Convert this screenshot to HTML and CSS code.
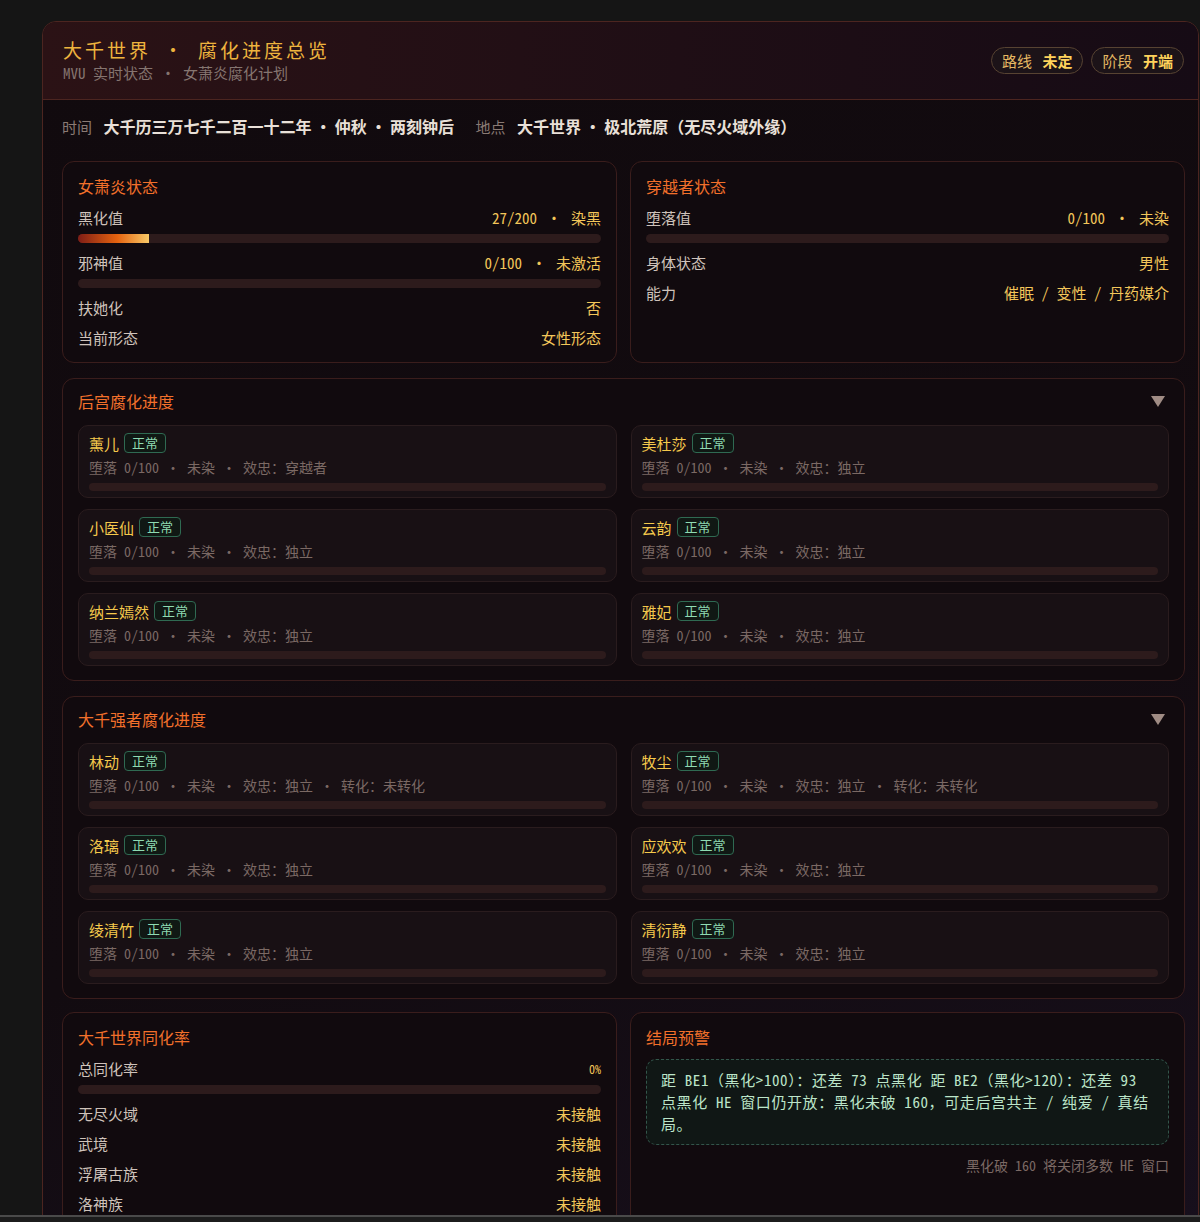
FILE: index.html
```html
<!DOCTYPE html>
<html lang="zh-CN">
<head>
    <meta charset="UTF-8">
    <meta name="viewport" content="width=device-width, initial-scale=1.0">
    <title>大千世界 · 腐化进度总览</title>
    <link rel="stylesheet" href="styles.css">
</head>
<body>
    <div class="panel">
        <header class="panel-head">
            <div>
                <h1 class="title">大千世界 · 腐化进度总览</h1>
                <div class="subtitle">MVU 实时状态 · 女萧炎腐化计划</div>
            </div>
            <div class="pills">
                <span class="pill">路线 <b>未定</b></span>
                <span class="pill">阶段 <b>开端</b></span>
            </div>
        </header>

        <div class="panel-body">
            <div class="where">
                <span class="where-label">时间</span>
                <span class="where-value">大千历三万七千二百一十二年 · 仲秋 · 两刻钟后</span>
                <span class="where-label gap">地点</span>
                <span class="where-value">大千世界 · 极北荒原（无尽火域外缘）</span>
            </div>

            <div class="two-col">
                <section class="card">
                    <h2 class="card-title">女萧炎状态</h2>
                    <div class="rows">
                        <div class="metric">
                            <div class="kv"><span>黑化值</span><span class="val">27/200 <span class="dot">·</span> 染黑</span></div>
                            <div class="bar"><div class="fill" style="width: 13.5%"></div></div>
                        </div>
                        <div class="metric">
                            <div class="kv"><span>邪神值</span><span class="val">0/100 <span class="dot">·</span> 未激活</span></div>
                            <div class="bar"></div>
                        </div>
                        <div class="kv"><span>扶她化</span><span class="val">否</span></div>
                        <div class="kv"><span>当前形态</span><span class="val">女性形态</span></div>
                    </div>
                </section>
                <section class="card">
                    <h2 class="card-title">穿越者状态</h2>
                    <div class="rows">
                        <div class="metric">
                            <div class="kv"><span>堕落值</span><span class="val">0/100 <span class="dot">·</span> 未染</span></div>
                            <div class="bar"></div>
                        </div>
                        <div class="kv"><span>身体状态</span><span class="val">男性</span></div>
                        <div class="kv"><span>能力</span><span class="val">催眠 / 变性 / 丹药媒介</span></div>
                    </div>
                </section>
            </div>

            <section class="card group">
                <div class="group-head">
                    <h2 class="card-title">后宫腐化进度</h2>
                    <span class="caret"></span>
                </div>
                <div class="people">
                    <div class="person">
                        <div class="person-name">薰儿 <span class="badge">正常</span></div>
                        <div class="person-meta">堕落 0/100 · 未染 · 效忠：穿越者</div>
                        <div class="bar thin"></div>
                    </div>
                    <div class="person">
                        <div class="person-name">美杜莎 <span class="badge">正常</span></div>
                        <div class="person-meta">堕落 0/100 · 未染 · 效忠：独立</div>
                        <div class="bar thin"></div>
                    </div>
                    <div class="person">
                        <div class="person-name">小医仙 <span class="badge">正常</span></div>
                        <div class="person-meta">堕落 0/100 · 未染 · 效忠：独立</div>
                        <div class="bar thin"></div>
                    </div>
                    <div class="person">
                        <div class="person-name">云韵 <span class="badge">正常</span></div>
                        <div class="person-meta">堕落 0/100 · 未染 · 效忠：独立</div>
                        <div class="bar thin"></div>
                    </div>
                    <div class="person">
                        <div class="person-name">纳兰嫣然 <span class="badge">正常</span></div>
                        <div class="person-meta">堕落 0/100 · 未染 · 效忠：独立</div>
                        <div class="bar thin"></div>
                    </div>
                    <div class="person">
                        <div class="person-name">雅妃 <span class="badge">正常</span></div>
                        <div class="person-meta">堕落 0/100 · 未染 · 效忠：独立</div>
                        <div class="bar thin"></div>
                    </div>
                </div>
            </section>

            <section class="card group">
                <div class="group-head">
                    <h2 class="card-title">大千强者腐化进度</h2>
                    <span class="caret"></span>
                </div>
                <div class="people">
                    <div class="person">
                        <div class="person-name">林动 <span class="badge">正常</span></div>
                        <div class="person-meta">堕落 0/100 · 未染 · 效忠：独立 · 转化：未转化</div>
                        <div class="bar thin"></div>
                    </div>
                    <div class="person">
                        <div class="person-name">牧尘 <span class="badge">正常</span></div>
                        <div class="person-meta">堕落 0/100 · 未染 · 效忠：独立 · 转化：未转化</div>
                        <div class="bar thin"></div>
                    </div>
                    <div class="person">
                        <div class="person-name">洛璃 <span class="badge">正常</span></div>
                        <div class="person-meta">堕落 0/100 · 未染 · 效忠：独立</div>
                        <div class="bar thin"></div>
                    </div>
                    <div class="person">
                        <div class="person-name">应欢欢 <span class="badge">正常</span></div>
                        <div class="person-meta">堕落 0/100 · 未染 · 效忠：独立</div>
                        <div class="bar thin"></div>
                    </div>
                    <div class="person">
                        <div class="person-name">绫清竹 <span class="badge">正常</span></div>
                        <div class="person-meta">堕落 0/100 · 未染 · 效忠：独立</div>
                        <div class="bar thin"></div>
                    </div>
                    <div class="person">
                        <div class="person-name">清衍静 <span class="badge">正常</span></div>
                        <div class="person-meta">堕落 0/100 · 未染 · 效忠：独立</div>
                        <div class="bar thin"></div>
                    </div>
                </div>
            </section>

            <div class="two-col last">
                <section class="card">
                    <h2 class="card-title">大千世界同化率</h2>
                    <div class="rows">
                        <div class="metric">
                            <div class="kv"><span>总同化率</span><span class="val small">0%</span></div>
                            <div class="bar"></div>
                        </div>
                        <div class="kv"><span>无尽火域</span><span class="val">未接触</span></div>
                        <div class="kv"><span>武境</span><span class="val">未接触</span></div>
                        <div class="kv"><span>浮屠古族</span><span class="val">未接触</span></div>
                        <div class="kv"><span>洛神族</span><span class="val">未接触</span></div>
                    </div>
                </section>
                <section class="card">
                    <h2 class="card-title">结局预警</h2>
                    <div class="warning">距 BE1（黑化&gt;100）：还差 73 点黑化 距 BE2（黑化&gt;120）：还差 93 点黑化 HE 窗口仍开放：黑化未破 160，可走后宫共主 / 纯爱 / 真结局。</div>
                    <div class="note">黑化破 160 将关闭多数 HE 窗口</div>
                </section>
            </div>
        </div>
    </div>
    <div class="statusbar"></div>
</body>
</html>
```

FILE: styles.css
```css
body {
    margin: 0;
    background-color: #151515;
    font-family: "Noto Sans Mono CJK SC", "Liberation Mono", "Noto Sans CJK SC", monospace;
    font-size: 15px;
    color: #cfc3bb;
}
.panel {
    margin: 21px 1px 0 42px;
    border: 1px solid #4c2520;
    border-radius: 14px 14px 0 0;
    background: linear-gradient(160deg, #110a0e 0%, #120b10 60%, #170f1c 100%);
    overflow: hidden;
}
.panel-head {
    display: flex;
    justify-content: space-between;
    align-items: center;
    padding: 14px 14px 17px 20px;
    border-bottom: 1px solid #4c2520;
    background: linear-gradient(90deg, #2b1215 0%, #1f0e15 55%, #160b15 100%);
}
.title {
    margin: 0;
    font-size: 19px;
    font-weight: normal;
    line-height: 27px;
    letter-spacing: 3px;
    color: #eeb43e;
}
.subtitle {
    margin-top: 1px;
    font-size: 15px;
    line-height: 18px;
    color: #857570;
}
.dot {
    margin: 0 2px;
}
.pills {
    display: flex;
    gap: 8px;
    margin-top: 3px;
}
.pill {
    height: 25px;
    line-height: 25px;
    padding: 0 10px;
    border: 1px solid #574332;
    border-radius: 14px;
    background-color: #1c1318;
    color: #e5b863;
}
.pill b {
    margin-left: 3px;
    color: #ffd35c;
}
.panel-body {
    display: flex;
    flex-direction: column;
    gap: 15px;
    padding: 15px 13px 0 19px;
}
.where {
    line-height: 22px;
    margin-bottom: 8px;
}
.where-label {
    font-size: 15px;
    color: #8a7a74;
    margin-right: 4px;
}
.where-label.gap {
    margin-left: 14px;
}
.where-value {
    font-family: "Noto Sans CJK SC", sans-serif;
    font-size: 16px;
    font-weight: bold;
    color: #e9e0d8;
}
.two-col {
    display: grid;
    grid-template-columns: 1fr 1fr;
    gap: 13px;
}
.two-col.last {
    margin-top: -2px;
}
.card {
    padding: 12px 15px 14px;
    border: 1px solid #3a1d1c;
    border-radius: 12px;
    background-color: #110a0e;
}
.card-title {
    margin: 0;
    font-size: 16px;
    font-weight: normal;
    line-height: 24px;
    color: #f2702b;
}
.rows {
    display: flex;
    flex-direction: column;
    gap: 10px;
    margin-top: 10px;
}
.kv {
    display: flex;
    justify-content: space-between;
    line-height: 20px;
}
.val {
    color: #f3c65a;
}
.val.small {
    font-size: 12px;
}
.bar {
    height: 9px;
    margin-top: 6px;
    border-radius: 5px;
    background-color: #2d1b1c;
    overflow: hidden;
}
.bar.thin {
    height: 8px;
    margin-top: 6px;
}
.fill {
    height: 100%;
    background: linear-gradient(90deg, #7e1d16 0%, #e4620f 55%, #f8c967 100%);
}
.group {
    padding: 10px 15px 14px;
}
.group-head {
    display: flex;
    justify-content: space-between;
    align-items: center;
}
.caret {
    width: 0;
    height: 0;
    margin-right: 4px;
    border-left: 7px solid transparent;
    border-right: 7px solid transparent;
    border-top: 11px solid #a08c84;
}
.people {
    display: grid;
    grid-template-columns: 1fr 1fr;
    gap: 11px 14px;
    margin-top: 12px;
}
.person {
    padding: 7px 10px 6px;
    border: 1px solid #2a1c1e;
    border-radius: 10px;
    background-color: #181014;
}
.person-name {
    display: flex;
    align-items: center;
    gap: 5px;
    height: 20px;
    font-size: 15px;
    color: #f5c94c;
}
.badge {
    height: 18px;
    line-height: 18px;
    padding: 0 7px;
    border: 1px solid #2f6a52;
    border-radius: 4px;
    background-color: #101814;
    font-size: 13px;
    color: #8fdbb2;
}
.person-meta {
    margin-top: 4px;
    line-height: 20px;
    font-size: 14px;
    color: #7b6964;
}
.warning {
    margin-top: 10px;
    padding: 9px 14px;
    border: 1px dashed #33564b;
    border-radius: 10px;
    background-color: #101715;
    line-height: 22px;
    letter-spacing: 0.6px;
    color: #bce5c9;
}
.note {
    margin-top: 9px;
    text-align: right;
    line-height: 22px;
    font-size: 14px;
    color: #7b6964;
}
.statusbar {
    position: fixed;
    left: 0;
    right: 0;
    bottom: 0;
    height: 5px;
    border-top: 2px solid #4a4a4a;
    background-color: #1c1c1c;
}
```
